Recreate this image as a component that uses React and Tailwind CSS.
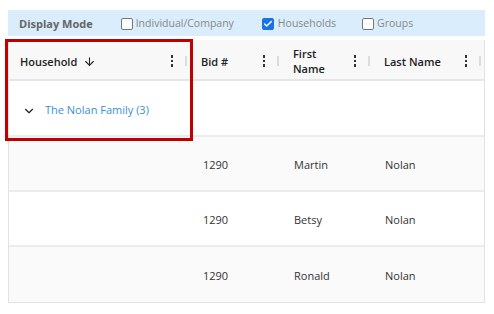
import { ArrowDown, ChevronDown, Check } from 'lucide-react';

const columns = [
  { key: 'household', label: 'Household', width: 'w-[181px]', sort: true },
  { key: 'bid', label: 'Bid #', width: 'w-[92px]' },
  { key: 'first', label: ['First', 'Name'], width: 'w-[91px]' },
  { key: 'last', label: 'Last Name', width: 'w-[111px]' },
];

const members = [
  { bid: '1290', first: 'Martin', last: 'Nolan' },
  { bid: '1290', first: 'Betsy', last: 'Nolan' },
  { bid: '1290', first: 'Ronald', last: 'Nolan' },
];

const Box = ({ checked }) => (
  <span
    className={`flex h-[12px] w-[12px] shrink-0 items-center justify-center rounded-[2px] border ${
      checked ? 'border-[#1a73e8] bg-[#1a73e8]' : 'border-[#767676] bg-white'
    }`}
  >
    {checked && <Check size={10} strokeWidth={3.5} color="white" />}
  </span>
);

const Kebab = () => (
  <span className="flex flex-col gap-[2px]">
    <span className="h-[2.5px] w-[2.5px] bg-[#333]" />
    <span className="h-[2.5px] w-[2.5px] bg-[#333]" />
    <span className="h-[2.5px] w-[2.5px] bg-[#333]" />
  </span>
);

export default function App() {
  return (
    <div
      className="relative h-[314px] w-[494px] overflow-hidden bg-white pl-[8px] pt-[10px]"
      style={{ fontFamily: '"Open Sans", "Noto Sans", sans-serif' }}
    >
      {/* Display mode bar */}
      <div className="flex h-[26px] w-[477px] items-center bg-[#d9edfc] pt-[2px] text-[10.5px]">
        <span className="ml-[11px] text-[11px] font-bold text-[#666]">Display Mode</span>
        <label className="ml-[28px] flex items-center gap-[3px] text-[#888]">
          <Box /> Individual/Company
        </label>
        <label className="ml-[28px] flex items-center gap-[4px] text-[#888]">
          <Box checked /> Households
        </label>
        <label className="ml-[26px] flex items-center gap-[3px] text-[#888]">
          <Box /> Groups
        </label>
      </div>

      {/* Grid */}
      <div className="mt-[4px] w-[477px] border-x border-b border-[#e2e2e2] text-[11px]">
        <div className="flex h-[41px] border-b-2 border-[#e6e6e6] bg-[#f8f8f8] pt-[3px] font-semibold text-[#222]">
          {columns.map((c) => (
            <div key={c.key} className={`${c.width} flex shrink-0 items-center pl-[11px] pr-[3px]`}>
              <span className="flex items-center gap-[6px] leading-[15px]">
                {Array.isArray(c.label) ? (
                  <span>
                    {c.label[0]}
                    <br />
                    {c.label[1]}
                  </span>
                ) : (
                  c.label
                )}
                {c.sort && <ArrowDown size={13} strokeWidth={2} />}
              </span>
              <span className="ml-auto mr-[12px]">
                <Kebab />
              </span>
              <span className="h-[10px] w-[2px] bg-[#dcdcdc]" />
            </div>
          ))}
        </div>

        <div className="flex h-[56px] items-center border-b-2 border-[#ececec] bg-white pt-[5px]">
          <ChevronDown size={14} strokeWidth={2} className="ml-[13px] text-[#222]" />
          <span className="ml-[9px] text-[#3a8fd8]">The Nolan Family (3)</span>
        </div>

        {members.map((m, i) => (
          <div
            key={m.first}
            className={`flex h-[55px] items-center pt-[4px] text-[#333] ${
              i < members.length - 1 ? 'border-b-2 border-[#ececec]' : ''
            } ${i % 2 === 0 ? 'bg-[#fafafa]' : 'bg-white'}`}
          >
            <div className="w-[181px] shrink-0" />
            <div className="w-[92px] shrink-0 pl-[13px]">{m.bid}</div>
            <div className="w-[91px] shrink-0 pl-[12px]">{m.first}</div>
            <div className="w-[111px] shrink-0 pl-[12px]">{m.last}</div>
          </div>
        ))}
      </div>

      {/* Highlight box */}
      <div className="pointer-events-none absolute left-[5px] top-[39px] h-[102px] w-[188px] border-[3px] border-[#c00000]" />
    </div>
  );
}
